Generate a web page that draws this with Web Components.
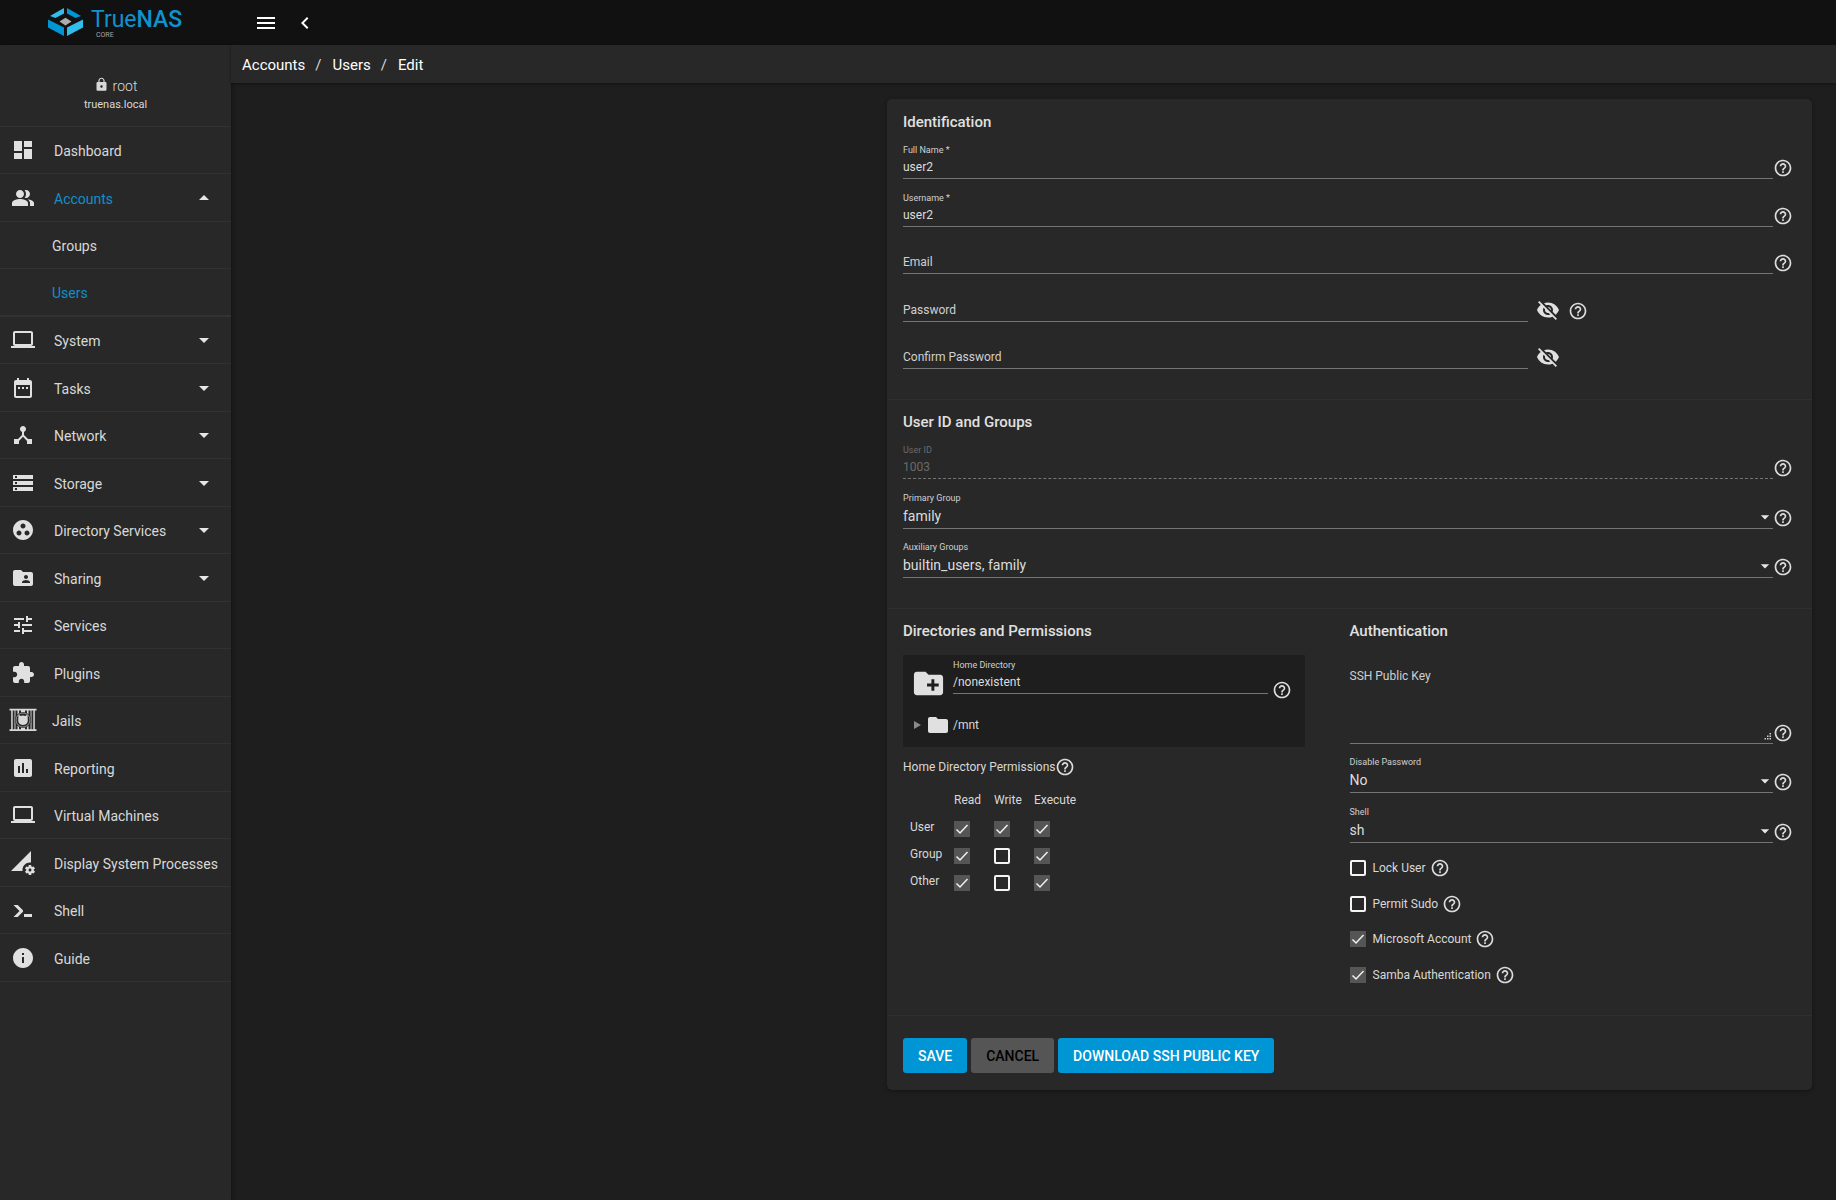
<!DOCTYPE html>
<html lang="en">
<head>
<meta charset="utf-8">
<title>TrueNAS - Edit User</title>
<style>
  html, body { height: 100%; }
  body {
    margin: 0;
    background: #1e1e1e;
    color: #d8d8d8;
    font-family: Roboto, "Liberation Sans", sans-serif;
    font-size: 12px;
    --bg: #1e1e1e;
    --panel: #282828;
    --rule: #323232;
    --line: #757575;
    --blue: #0095d5;
  }
</style>
</head>
<body>
<tn-app>
  <tn-logo slot="brand"></tn-logo>
  <tn-breadcrumbs slot="crumbs" items="Accounts,Users,Edit"></tn-breadcrumbs>
  <tn-nav slot="nav">
    <tn-nav-item icon="dashboard">Dashboard</tn-nav-item>
    <tn-nav-item icon="people" arrow="up" active>Accounts</tn-nav-item>
    <tn-nav-item sub>Groups</tn-nav-item>
    <tn-nav-item sub active last>Users</tn-nav-item>
    <tn-nav-item icon="laptop" arrow="down">System</tn-nav-item>
    <tn-nav-item icon="calendar" arrow="down">Tasks</tn-nav-item>
    <tn-nav-item icon="hub" arrow="down">Network</tn-nav-item>
    <tn-nav-item icon="storage" arrow="down">Storage</tn-nav-item>
    <tn-nav-item icon="group_work" arrow="down">Directory Services</tn-nav-item>
    <tn-nav-item icon="folder_shared" arrow="down">Sharing</tn-nav-item>
    <tn-nav-item icon="tune">Services</tn-nav-item>
    <tn-nav-item icon="extension">Plugins</tn-nav-item>
    <tn-nav-item icon="jail" wide>Jails</tn-nav-item>
    <tn-nav-item icon="chart">Reporting</tn-nav-item>
    <tn-nav-item icon="laptop">Virtual Machines</tn-nav-item>
    <tn-nav-item icon="perm_data">Display System Processes</tn-nav-item>
    <tn-nav-item icon="console">Shell</tn-nav-item>
    <tn-nav-item icon="info">Guide</tn-nav-item>
  </tn-nav>
  <tn-card>
    <tn-section heading="Identification">
      <tn-field label="Full Name *" value="user2" help></tn-field>
      <tn-field label="Username *" value="user2" help></tn-field>
      <tn-field label="Email" help></tn-field>
      <tn-field label="Password" type="password" secret help></tn-field>
      <tn-field label="Confirm Password" type="password" secret></tn-field>
    </tn-section>
    <tn-section heading="User ID and Groups" kind="selects">
      <tn-field label="User ID" value="1003" disabled help></tn-field>
      <tn-select label="Primary Group" value="family"></tn-select>
      <tn-select label="Auxiliary Groups" value="builtin_users, family"></tn-select>
    </tn-section>
    <tn-columns>
      <tn-section heading="Directories and Permissions" kind="plain">
        <tn-directory></tn-directory>
        <tn-permissions></tn-permissions>
      </tn-section>
      <tn-section heading="Authentication" kind="plain">
        <tn-textarea label="SSH Public Key"></tn-textarea>
        <tn-group kind="selects">
          <tn-select label="Disable Password" value="No"></tn-select>
          <tn-select label="Shell" value="sh"></tn-select>
        </tn-group>
        <tn-group kind="checks">
          <tn-checkbox label="Lock User"></tn-checkbox>
          <tn-checkbox label="Permit Sudo"></tn-checkbox>
          <tn-checkbox label="Microsoft Account" checked></tn-checkbox>
          <tn-checkbox label="Samba Authentication" checked></tn-checkbox>
        </tn-group>
      </tn-section>
    </tn-columns>
    <tn-actions>
      <tn-button>SAVE</tn-button>
      <tn-button plain>CANCEL</tn-button>
      <tn-button>DOWNLOAD SSH PUBLIC KEY</tn-button>
    </tn-actions>
  </tn-card>
</tn-app>

<script>
const ICONS = {
  menu: 'M3 18h18v-2H3v2zm0-5h18v-2H3v2zm0-7v2h18V6H3z',
  back: 'M15.41 7.41L14 6l-6 6 6 6 1.41-1.41L10.83 12z',
  lock: 'M18 8h-1V6c0-2.76-2.24-5-5-5S7 3.24 7 6v2H6c-1.1 0-2 .9-2 2v10c0 1.1.9 2 2 2h12c1.1 0 2-.9 2-2V10c0-1.1-.9-2-2-2zm-6 9c-1.1 0-2-.9-2-2s.9-2 2-2 2 .9 2 2-.9 2-2 2zm3.1-9H8.9V6c0-1.71 1.39-3.1 3.1-3.1 1.71 0 3.1 1.39 3.1 3.1v2z',
  dashboard: 'M3 13h8V3H3v10zm0 8h8v-6H3v6zm10 0h8V11h-8v10zm0-18v6h8V3h-8z',
  people: 'M16.67 13.13C18.04 14.06 19 15.32 19 17v3h4v-3c0-2.18-3.57-3.47-6.33-3.87zM15 12c2.21 0 4-1.79 4-4s-1.79-4-4-4c-.47 0-.91.1-1.33.24C14.5 5.27 15 6.58 15 8s-.5 2.73-1.33 3.76c.42.14.86.24 1.33.24zM9 12c2.21 0 4-1.79 4-4s-1.79-4-4-4-4 1.79-4 4 1.79 4 4 4zm0 1c-2.67 0-8 1.34-8 4v3h16v-3c0-2.66-5.33-4-8-4z',
  laptop: 'M20 18c1.1 0 1.99-.9 1.99-2L22 5c0-1.100-.9-2-2-2H4c-1.100 0-2 .9-2 2v11c0 1.100.9 2 2 2H0v2h24v-2h-4zM4 5h16v11H4V5z',
  calendar: 'M9 11H7v2h2v-2zm4 0h-2v2h2v-2zm4 0h-2v2h2v-2zm2-7h-1V2h-2v2H8V2H6v2H5c-1.11 0-1.99.9-1.99 2L3 20c0 1.100.89 2 2 2h14c1.100 0 2-.9 2-2V6c0-1.100-.9-2-2-2zm0 16H5V9h14v11z',
  hub: 'M17 16l-4-4V8.820C14.160 8.400 15 7.300 15 6c0-1.660-1.340-3-3-3S9 4.340 9 6c0 1.300.840 2.400 2 2.820V12l-4 4H3v5h5v-3.050l4-4.200 4 4.200V21h5v-5h-4z',
  storage: 'M2 20h20v-4H2v4zm2-3h2v2H4v-2zM2 4v4h20V4H2zm4 3H4V5h2v2zm-4 7h20v-4H2v4zm2-3h2v2H4v-2z',
  group_work: 'M12 2C6.480 2 2 6.480 2 12s4.480 10 10 10 10-4.480 10-10S17.520 2 12 2zM8 17.500c-1.380 0-2.500-1.120-2.500-2.500s1.120-2.500 2.500-2.500 2.500 1.120 2.500 2.500-1.120 2.500-2.500 2.500zM9.500 8c0-1.380 1.120-2.500 2.500-2.500s2.500 1.120 2.500 2.500-1.120 2.500-2.500 2.500S9.500 9.380 9.500 8zm6.500 9.500c-1.380 0-2.500-1.120-2.500-2.500s1.120-2.500 2.500-2.500 2.500 1.120 2.500 2.500-1.120 2.500-2.500 2.500z',
  folder_shared: 'M20 6h-8l-2-2H4c-1.100 0-1.990.9-1.990 2L2 18c0 1.100.9 2 2 2h16c1.100 0 2-.9 2-2V8c0-1.100-.9-2-2-2zm-5 3c1.100 0 2 .9 2 2s-.9 2-2 2-2-.9-2-2 .9-2 2-2zm4 8h-8v-1c0-1.330 2.670-2 4-2s4 .670 4 2v1z',
  tune: 'M3 17v2h6v-2H3zM3 5v2h10V5H3zm10 16v-2h8v-2h-8v-2h-2v6h2zM7 9v2H3v2h4v2h2V9H7zm14 4v-2H11v2h10zm-6-4h2V7h4V5h-4V3h-2v6z',
  extension: 'M20.500 11H19V7c0-1.100-.9-2-2-2h-4V3.500C13 2.120 11.880 1 10.500 1S8 2.120 8 3.500V5H4c-1.100 0-1.990.9-1.990 2v3.800H3.500c1.490 0 2.700 1.210 2.700 2.700s-1.210 2.700-2.700 2.700H2V20c0 1.100.9 2 2 2h3.800v-1.500c0-1.490 1.210-2.700 2.700-2.700 1.490 0 2.700 1.210 2.700 2.700V22H17c1.100 0 2-.9 2-2v-4h1.500c1.380 0 2.500-1.120 2.500-2.500S21.880 11 20.500 11z',
  chart: 'M19 3H5c-1.100 0-2 .9-2 2v14c0 1.100.9 2 2 2h14c1.100 0 2-.9 2-2V5c0-1.100-.9-2-2-2zM9 17H7v-7h2v7zm4 0h-2V7h2v10zm4 0h-2v-4h2v4z',
  perm_data: 'M18.99 11.5c.34 0 .67.03 1 .07L20 0 0 20h11.56c-.04-.33-.07-.66-.07-1 0-4.14 3.36-7.5 7.5-7.5zm3.71 7.99c.02-.16.04-.32.04-.49 0-.17-.01-.33-.04-.49l1.060-.83c.09-.08.12-.21.06-.32l-1-1.73c-.06-.11-.19-.15-.31-.11l-1.24.5c-.26-.2-.54-.37-.85-.49l-.19-1.32c-.01-.12-.12-.21-.24-.21h-2c-.12 0-.23.09-.25.21l-.19 1.32c-.3.13-.59.29-.85.49l-1.24-.5c-.11-.04-.24 0-.31.11l-1 1.73c-.06.11-.04.24.06.32l1.06.83c-.02.16-.03.32-.03.49 0 .17.01.33.03.49l-1.06.83c-.09.08-.12.21-.06.32l1 1.73c.06.11.19.15.31.11l1.24-.5c.26.2.54.37.85.49l.19 1.32c.02.12.12.21.25.21h2c.12 0 .23-.09.25-.21l.19-1.32c.3-.13.59-.29.84-.49l1.25.5c.11.04.24 0 .31-.11l1-1.73c.06-.11.03-.24-.06-.32l-1.07-.83zm-3.71 1.01c-.83 0-1.5-.67-1.5-1.5s.67-1.5 1.5-1.5 1.5.67 1.5 1.5-.67 1.5-1.5 1.5z',
  console: 'M13 19V16H21V19H13M8.5 13L2.47 7H6.71L11.67 11.95C12.25 12.54 12.25 13.5 11.67 14.07L6.74 19H2.5L8.5 13Z',
  info: 'M12 2C6.480 2 2 6.480 2 12s4.480 10 10 10 10-4.480 10-10S17.520 2 12 2zm1 15h-2v-6h2v6zm0-8h-2V7h2v2z',
  down: 'M7 10l5 5 5-5z',
  up: 'M7 14l5-5 5 5z',
  right: 'M6 4l14 8-14 8z',
  help: 'M11 18h2v-2h-2v2zm1-16C6.480 2 2 6.480 2 12s4.480 10 10 10 10-4.480 10-10S17.520 2 12 2zm0 18c-4.410 0-8-3.590-8-8s3.590-8 8-8 8 3.590 8 8-3.590 8-8 8zm0-14c-2.210 0-4 1.790-4 4h2c0-1.100.9-2 2-2s2 .9 2 2c0 2-3 1.750-3 5h2c0-2.250 3-2.500 3-5 0-2.210-1.790-4-4-4z',
  eye_off: 'M12 7c2.760 0 5 2.240 5 5 0 .650-.130 1.260-.360 1.830l2.920 2.920c1.510-1.260 2.700-2.890 3.430-4.750-1.730-4.390-6-7.500-11-7.500-1.400 0-2.740.250-3.980.7l2.160 2.160C10.740 7.130 11.350 7 12 7zM2 4.270l2.280 2.280.46.46C3.080 8.300 1.780 10.020 1 12c1.730 4.390 6 7.500 11 7.500 1.550 0 3.030-.300 4.380-.840l.42.42L19.730 22 21 20.730 3.270 3 2 4.270zM7.530 9.800l1.550 1.550c-.050.210-.080.430-.080.650 0 1.660 1.340 3 3 3 .220 0 .440-.030.650-.080l1.550 1.550c-.670.330-1.410.530-2.200.530-2.760 0-5-2.240-5-5 0-.790.200-1.530.530-2.200zm4.310-.780l3.150 3.150.020-.160c0-1.660-1.340-3-3-3l-.170.010z',
  folder: 'M10 4H4c-1.100 0-1.990.9-1.990 2L2 18c0 1.100.9 2 2 2h16c1.100 0 2-.9 2-2V8c0-1.100-.9-2-2-2h-8l-2-2z',
  folder_add: 'M20 6h-8l-2-2H4c-1.110 0-1.990.890-1.990 2L2 18c0 1.110.890 2 2 2h16c1.110 0 2-.890 2-2V8c0-1.110-.890-2-2-2zm-1 8h-3v3h-2v-3h-3v-2h3V9h2v3h3v2z'
};

/* Beastie behind bars, drawn on a 28 by 24 grid */
const JAIL = `<svg viewBox="0 0 28 24" width="28" height="24" aria-hidden="true">
  <g fill="currentColor">
    <path d="M.5 .8h27v1.700h-27zM.5 21.300h27v1.700h-27zM2.200 2h1.500v20H2.200zM24.300 2h1.500v20h-1.500zM8.500 2h1.500v20H8.500zM18 2h1.500v20H18zM12 2h4v3h-4zM12 18h4v4h-4z"/>
    <path opacity=".6" d="M5.200 2h1.500v20H5.200zM21.300 2h1.500v20h-1.500z"/>
  </g>
  <circle cx="14" cy="12" r="8" fill="#282828"/>
  <circle cx="14" cy="12" r="7" fill="none" stroke="currentColor" stroke-width=".8" opacity=".75"/>
  <path fill="currentColor" d="M9.500 6.500l2 1.500q2.500-1 5 0l2-1.500.2 4q1 6.500-4.700 6.500t-4.700-6.500z"/>
</svg>`;

const define = (name, css, html) => customElements.define(name, class extends HTMLElement {
  connectedCallback() {
    if (this.shadowRoot) return;
    const root = this.attachShadow({ mode: 'open' });
    const body = typeof html === 'function' ? html(this) : html;
    root.innerHTML = `<style>:host,*{box-sizing:border-box}${css}</style>${body}`;
  }
});
const attr = (el, name) => el.getAttribute(name) || '';
const has = (el, name, text) => el.hasAttribute(name) ? text : '';

define('tn-icon', `
  :host { display: block; flex: none; width: 24px; height: 24px; }
  svg { display: block; width: 100%; height: 100%; fill: currentColor; }`,
  el => `<svg viewBox="0 0 24 24" aria-hidden="true"><path d="${ICONS[attr(el, 'name')]}"/></svg>`);

define('tn-help', `
  :host { display: block; flex: none; }
  button { display: block; border: 0; padding: 0; background: none; color: #dcdcdc; cursor: pointer; }
  tn-icon { width: 20px; height: 20px; }`,
  `<button type="button" aria-label="Help"><tn-icon name="help"></tn-icon></button>`);

define('tn-logo', `
  :host { display: flex; align-items: flex-start; gap: 8px; }
  svg { display: block; }
  .name { font-size: 23px; line-height: 24px; color: #0f93cf; }
  .name b { font-weight: 500; }
  .edition { font-size: 7px; line-height: 6px; color: #a8a8a8; padding-left: 5px; }`,
  `<svg width="35" height="28" viewBox="0 0 35 28" aria-hidden="true">
    <path fill="#31beec" d="M16 0v5.500L7.500 10 2 8z"/>
    <path fill="#0095d5" d="M19 0v5.500l8.500 4.500L33 8z"/>
    <path fill="#0095d5" d="M0 11.500l16 8V28L0 19.500z"/>
    <path fill="#31beec" d="M35 11.500l-16 8V28l16-8.500z"/>
    <path fill="#aeada9" d="M17.500 9.800l6 3.800-6 3.800-6-3.800z"/>
  </svg>
  <div><div class="name">True<b>NAS</b></div><div class="edition">CORE</div></div>`);

define('tn-app', `
  :host { display: grid; grid-template: 45px 1fr / 231px minmax(0, 1fr); min-height: 100%; }
  .brand { background: #111; padding: 8px 0 0 48px; }
  .bar { background: #111; display: flex; align-items: center; gap: 15px; padding-left: 23px; color: #fff; }
  .bar button { border: 0; padding: 0; background: none; color: inherit; }
  aside { background: var(--panel); box-shadow: 1px 0 4px rgba(0,0,0,.4); }
  .who { display: flex; flex-direction: column; align-items: center; height: 82px; padding-top: 32px; border-bottom: 1px solid var(--rule); }
  .user { display: flex; gap: 4px; font-size: 14px; line-height: 18px; font-weight: 300; }
  .user tn-icon { width: 15px; height: 15px; }
  .host { font-size: 11px; line-height: 20px; }
  main { display: flex; flex-direction: column; min-width: 0; }
  .content { display: flex; justify-content: flex-end; padding: 16px 24px; }`,
  `<div class="brand"><slot name="brand"></slot></div>
  <header class="bar">
    <button type="button" aria-label="Toggle menu"><tn-icon name="menu"></tn-icon></button>
    <button type="button" aria-label="Collapse"><tn-icon name="back"></tn-icon></button>
  </header>
  <aside>
    <div class="who">
      <div class="user"><tn-icon name="lock"></tn-icon><span>root</span></div>
      <div class="host">truenas.local</div>
    </div>
    <slot name="nav"></slot>
  </aside>
  <main><slot name="crumbs"></slot><div class="content"><slot></slot></div></main>`);

define('tn-breadcrumbs', `
  :host { display: block; background: var(--panel); box-shadow: 0 1px 3px rgba(0,0,0,.4); }
  nav { display: flex; align-items: center; height: 38px; padding: 2px 0 0 11px; font-size: 15px; line-height: 20px; color: #fff; }
  a { color: inherit; text-decoration: none; }
  i { font-style: normal; padding: 0 11px 0 10px; color: #d8d8d8; }`,
  el => `<nav aria-label="Breadcrumb">${attr(el, 'items').split(',')
    .map(t => `<a href="#${t.toLowerCase()}">${t}</a>`).join('<i>/</i>')}</nav>`);

define('tn-nav', `
  :host { display: block; }
  nav { display: grid; grid-template-columns: minmax(0, 1fr); grid-auto-rows: 47px 48px; }`,
  `<nav aria-label="Main"><slot></slot></nav>`);

define('tn-nav-item', `
  :host { display: block; }
  a { display: flex; align-items: center; gap: 19px; height: 100%; padding: 0 15px 0 11px;
      border-bottom: 1px solid var(--rule); color: #d8d8d8; text-decoration: none; font-size: 14px; line-height: 18px; }
  a.last { border-bottom-width: 2px; }
  a.sub { padding-left: 52px; }
  a.wide { padding-left: 9px; gap: 15px; }
  a.arrowed { gap: 0; }
  a.arrowed span { padding-left: 19px; }
  span { flex: 1; min-width: 0; padding-top: 2px; white-space: nowrap; }
  .active span { color: #118fc8; }
  tn-icon { color: #e0e0e0; }
  .arrow { color: #e6e6e6; }`,
  el => {
    const icon = attr(el, 'icon');
    const pic = icon === 'jail' ? JAIL : icon ? `<tn-icon name="${icon}"></tn-icon>` : '';
    const arrow = attr(el, 'arrow');
    return `<a href="#" class="${has(el, 'sub', 'sub ')}${has(el, 'wide', 'wide ')}${has(el, 'active', 'active ')}${has(el, 'arrow', 'arrowed ')}${has(el, 'last', 'last')}">
      ${pic}<span><slot></slot></span>${arrow ? `<tn-icon class="arrow" name="${arrow}"></tn-icon>` : ''}</a>`;
  });

define('tn-card', `
  :host { display: block; width: 925px; max-width: 100%; background: var(--panel); border-radius: 5px;
          box-shadow: 0 1px 4px rgba(0,0,0,.4); }`,
  `<form><slot></slot></form>`);

define('tn-section', `
  :host { display: block; padding: 12px 16px 30px; border-top: 1px solid #2f2f2f; }
  :host(:first-child) { border-top-color: transparent; }
  :host([kind=plain]) { padding: 0; border: 0; }
  h2 { margin: 0; font-size: 15px; line-height: 20px; font-weight: 500; color: #e0e0e0; }
  .rows { display: grid; grid-auto-rows: 47px 48px; align-items: end; }
  .selects { grid-template-rows: 47px; grid-auto-rows: 50px 49px; }
  .plain { display: block; }`,
  el => `<h2>${attr(el, 'heading')}</h2><div class="rows ${attr(el, 'kind')}"><slot></slot></div>`);

define('tn-columns', `
  :host { display: grid; grid-template-columns: 1fr 1fr; padding: 12px 16px 30px; border-top: 1px solid #2f2f2f; }`,
  `<slot></slot>`);

define('tn-group', `
  :host { display: grid; align-items: end; }
  :host([kind=selects]) { grid-auto-rows: 49px 50px; }
  :host([kind=checks]) { grid-auto-rows: 35px 36px; }`,
  `<slot></slot>`);

const CONTROL = `
  :host { display: flex; align-items: flex-end; padding-right: 3px; }
  .box { position: relative; flex: 1; min-width: 0; display: flex; flex-direction: column; }
  label { font-size: 9px; line-height: 12px; color: #d0d0d0; }
  input, select, textarea { display: block; width: 100%; margin: 0; border: 0; border-bottom: 1px solid var(--line);
    border-radius: 0; padding: 3px 0; background: none; outline: 0; color: #dcdcdc; font: 12px/16px Roboto, "Liberation Sans", sans-serif; }
  input { height: 23px; }
  tn-help { margin-bottom: 1px; }`;

define('tn-field', CONTROL + `
  .empty label { position: absolute; left: 0; bottom: 4px; font-size: 12px; line-height: 16px; }
  :host([disabled]) label, :host([disabled]) input { color: #6a6a6a; }
  :host([disabled]) input { border-bottom-style: dashed; }
  :host([secret]) { padding-right: 0; }
  :host([secret]) .box { flex: 0 0 70%; }
  .eye { border: 0; padding: 0; margin: 0 8px; background: none; color: #e0e0e0; }
  :host([inline]) { padding: 0; }`,
  el => `<div class="box ${attr(el, 'value') ? '' : 'empty'}">
      <label for="c">${attr(el, 'label')}</label>
      <input id="c" type="${attr(el, 'type') || 'text'}" value="${attr(el, 'value')}" ${has(el, 'disabled', 'disabled')}>
    </div>${has(el, 'secret', '<button class="eye" type="button" aria-label="Show password"><tn-icon name="eye_off"></tn-icon></button>')}
    ${has(el, 'help', '<tn-help></tn-help>')}`);

define('tn-select', CONTROL + `
  select { appearance: none; height: 25px; font-size: 14px; line-height: 18px; }
  .arrow { position: absolute; right: -2px; bottom: 2px; width: 20px; height: 20px; color: #e6e6e6; pointer-events: none; }`,
  el => `<div class="box">
      <label for="c">${attr(el, 'label')}</label>
      <select id="c"><option>${attr(el, 'value')}</option></select>
      <tn-icon class="arrow" name="down"></tn-icon>
    </div><tn-help></tn-help>`);

define('tn-textarea', CONTROL + `
  :host { padding-top: 25px; }
  textarea { height: 78px; resize: none; }
  label { position: absolute; left: 0; top: 2px; font-size: 12px; line-height: 16px; }
  .grip { position: absolute; right: 2px; bottom: 4px; fill: #cfcfcf; }`,
  el => `<div class="box">
      <label for="c">${attr(el, 'label')}</label>
      <textarea id="c"></textarea>
      <svg class="grip" width="7" height="7" viewBox="0 0 7 7" aria-hidden="true">
        <path d="M5.500 0H7v1.500H5.500zM5.500 2.500H7V4H5.500zM3 2.500h1.500V4H3zM5.500 5H7v1.500H5.500zM3 5h1.500v1.500H3zM.5 5H2v1.500H.5z"/></svg>
    </div><tn-help></tn-help>`);

const TICK = `
  input { appearance: none; display: block; flex: none; width: 16px; height: 16px; margin: 0; border: 2px solid #f4f4f4; border-radius: 2px; }
  input:checked { border: 0; border-radius: 0; background: #555; }
  .tick { position: relative; display: block; width: 16px; height: 16px; }
  .tick svg { position: absolute; inset: 0; fill: none; stroke: #f0f0f0; stroke-width: 1.500; pointer-events: none; }
  input:not(:checked) + svg { display: none; }`;
const tick = (id, checked, label) => `<span class="tick"><input type="checkbox" id="${id}" ${checked ? 'checked' : ''}
  ${label ? `aria-label="${label}"` : ''}><svg viewBox="0 0 16 16" aria-hidden="true"><path d="M2.500 8.500l3.500 3.500L13.500 4"/></svg></span>`;

define('tn-checkbox', TICK + `
  :host { display: flex; align-items: center; height: 20px; }
  label { padding: 0 4px 0 7px; font-size: 12px; line-height: 20px; }`,
  el => `${tick('c', el.hasAttribute('checked'))}<label for="c">${attr(el, 'label')}</label><tn-help></tn-help>`);

define('tn-directory', `
  :host { display: block; width: 90%; margin-top: 14px; padding: 4px 13px 10px 8px; background: var(--bg); }
  .top { display: flex; align-items: flex-start; height: 42px; }
  .add { width: 35px; height: 35px; margin: 7px 7px 0 0; color: #e0e0e0; }
  tn-field { flex: 1; }
  tn-help { margin: 21px 0 0 4px; }
  .node { display: flex; align-items: center; margin-top: 12px; line-height: 24px; }
  button { border: 0; padding: 0; margin-right: 3px; background: none; color: #8a8a8a; }
  button tn-icon { width: 12px; height: 12px; }
  .folder { color: #e0e0e0; margin-right: 3px; }`,
  `<div class="top"><tn-icon class="add" name="folder_add"></tn-icon>
    <tn-field inline label="Home Directory" value="/nonexistent"></tn-field><tn-help></tn-help></div>
  <div class="node"><button type="button" aria-label="Expand"><tn-icon name="right"></tn-icon></button>
    <tn-icon class="folder" name="folder"></tn-icon><span>/mnt</span></div>`);

define('tn-permissions', TICK + `
  :host { display: block; padding-top: 10px; }
  .title { display: flex; align-items: center; line-height: 20px; }
  table { margin-top: 15px; border-collapse: collapse; table-layout: fixed; width: 171px; }
  th { padding: 0; text-align: left; font-weight: 400; line-height: 16px; }
  thead th { height: 23px; width: 40px; vertical-align: top; }
  thead td { width: 51px; padding: 0; }
  tbody th { height: 27px; padding: 0 0 3px 7px; vertical-align: middle; }
  tbody td { padding: 0; vertical-align: middle; }`,
  () => {
    const cols = ['Read', 'Write', 'Execute'];
    const rows = [['User', 1, 1, 1], ['Group', 1, 0, 1], ['Other', 1, 0, 1]];
    return `<div class="title"><span>Home Directory Permissions</span><tn-help></tn-help></div>
    <table><thead><tr><td></td>${cols.map(c => `<th scope="col">${c}</th>`).join('')}</tr></thead>
    <tbody>${rows.map(([n, ...v]) => `<tr><th scope="row">${n}</th>${v.map((x, i) =>
      `<td>${tick(n + i, x, n + ' ' + cols[i])}</td>`).join('')}</tr>`).join('')}</tbody></table>`;
  });

define('tn-actions', `
  :host { display: flex; gap: 4px; padding: 22px 16px 17px; border-top: 1px solid #2f2f2f; }`,
  `<slot></slot>`);

define('tn-button', `
  :host { display: block; }
  button { height: 35px; padding: 0 15px; border: 0; border-radius: 3px; background: var(--blue); color: #fff;
    font: 500 14px/20px Roboto, "Liberation Sans", sans-serif; }
  :host([plain]) button { background: #555; color: #000; }`,
  `<button type="button"><slot></slot></button>`);
</script>
</body>
</html>
